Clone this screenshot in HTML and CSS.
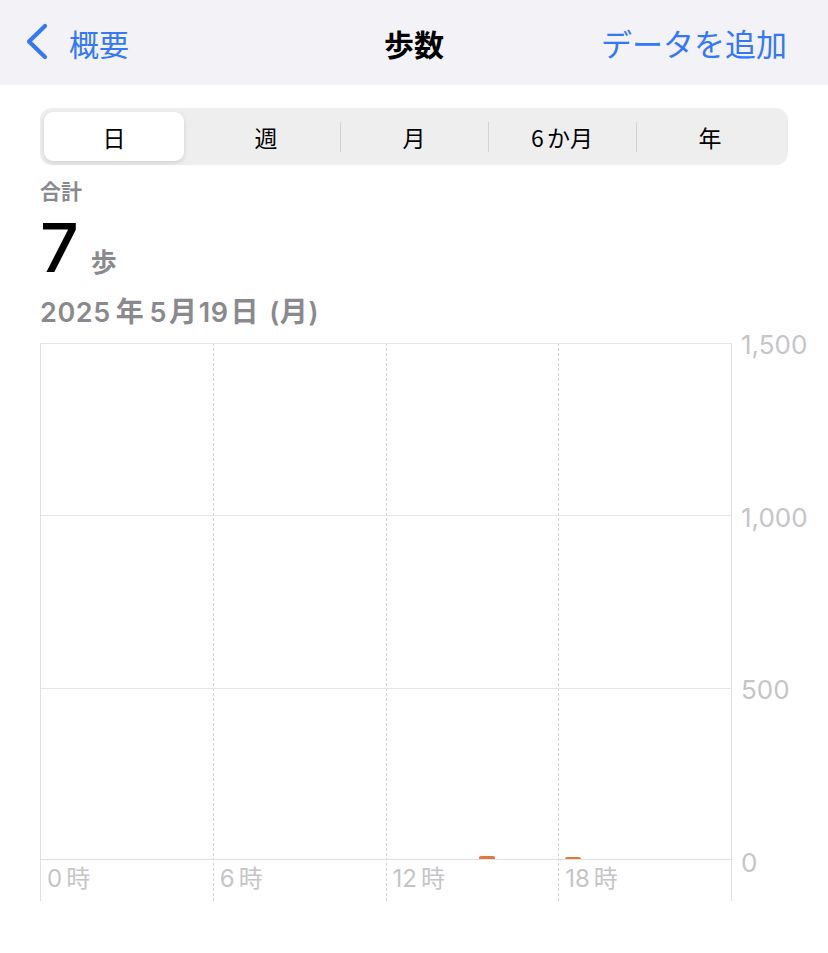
FILE: index.html
```html
<!DOCTYPE html>
<html lang="ja">
<head>
    <meta charset="UTF-8">
    <meta name="viewport" content="width=device-width, initial-scale=1.0">
    <title>歩数</title>
    <link rel="stylesheet" href="styles.css">
</head>
<body>
    <header class="navbar">
        <a class="back" href="#">
            <svg class="chevron" width="26" height="40" viewBox="0 0 26 40">
                <path d="M20 3 L4 18.5 L20 34" fill="none" stroke="#3478f6" stroke-width="4.2" stroke-linecap="round" stroke-linejoin="round"/>
            </svg>
            <span>概要</span>
        </a>
        <h1 class="title">歩数</h1>
        <a class="add" href="#">データを追加</a>
    </header>

    <main class="content">
        <div class="segmented">
            <div class="seg selected">日</div>
            <div class="seg">週</div>
            <div class="seg sep">月</div>
            <div class="seg sep">6<span class="kana">か</span>月</div>
            <div class="seg sep">年</div>
        </div>

        <section class="summary">
            <div class="label">合計</div>
            <div class="total"><span class="num">7</span><span class="unit">歩</span></div>
            <div class="date">2025<span class="cj">年</span>5<span class="cjn">月</span>19<span class="cjn">日</span><span class="paren">(<span class="cjp">月</span>)</span></div>
        </section>

        <!-- chart: 4 columns of 6 hours, 3 bands of 500 steps -->
        <section class="chart">
            <div class="plot">
                <div class="col c1"><span class="xlabel">0<span class="h">時</span></span></div>
                <div class="col c2"><span class="xlabel">6<span class="h">時</span></span></div>
                <div class="col c3"><span class="xlabel">12<span class="h">時</span></span></div>
                <div class="col c4"><span class="xlabel">18<span class="h">時</span></span></div>

                <div class="band b1"></div>
                <div class="band b2"></div>
                <div class="band b3"></div>

                <div class="bars c3"><span class="bar" style="margin-left: 92px; width: 16px; height: 3px;"></span></div>
                <div class="bars c4"><span class="bar" style="margin-left: 6px; width: 16px; height: 2px;"></span></div>
            </div>
            <div class="yaxis">
                <span>1,500</span>
                <span>1,000</span>
                <span>500</span>
                <span>0</span>
            </div>
        </section>
    </main>
</body>
</html>
```

FILE: styles.css
```css
body {
    margin: 0;
    padding: 0;
    background: #fff;
    color: #000;
    font-family: "Inter", "Noto Sans CJK JP", sans-serif;
}

a {
    text-decoration: none;
}

.navbar {
    height: 85px;
    background: #f2f2f7;
    display: grid;
    grid-template-columns: 1fr auto 1fr;
    align-items: center;
    padding: 0 41px;
}

.back {
    display: flex;
    align-items: center;
    gap: 18px;
    margin-left: -16px;
    color: #3478f6;
    font-size: 30px;
    font-family: "Noto Sans CJK JP", sans-serif;
}

.chevron {
    display: block;
}

.title {
    margin: 0;
    font-size: 30px;
    font-weight: 700;
    font-family: "Noto Sans CJK JP", sans-serif;
}

.add {
    justify-self: end;
    color: #3478f6;
    font-size: 31px;
    font-family: "Noto Sans CJK JP", sans-serif;
}

.content {
    padding: 23px 40px 0 40px;
}

.segmented {
    height: 57px;
    box-sizing: border-box;
    background: #eeeeef;
    border-radius: 12px;
    padding: 4px;
    display: grid;
    grid-template-columns: repeat(5, 1fr);
}

.seg {
    display: flex;
    align-items: center;
    justify-content: center;
    font-size: 23px;
    font-family: "Noto Sans CJK JP", sans-serif;
}

.seg .kana {
    margin-left: 3px;
}

.seg.sep {
    background: linear-gradient(#d3d3d6, #d3d3d6) left center / 1px 30px no-repeat;
}

.seg.selected {
    background: #fff;
    border-radius: 9px;
    margin-right: 8px;
    box-shadow: 0 2px 5px rgba(0, 0, 0, 0.12);
}

.summary {
    padding-top: 14px;
}

.label {
    color: #8a8a8e;
    font-size: 21px;
    font-weight: 700;
    line-height: 26px;
}

.total {
    display: flex;
    align-items: baseline;
    height: 90px;
    line-height: 84px;
}

.total .num {
    font-size: 68px;
    font-weight: 500;
}

.total .unit {
    margin-left: 12px;
    color: #8a8a8e;
    font-size: 26px;
    font-weight: 700;
    font-family: "Noto Sans CJK JP", sans-serif;
}

.date {
    color: #8a8a8e;
    font-size: 27px;
    font-weight: 600;
    line-height: 30px;
    letter-spacing: 0.6px;
}

.date .cj,
.date .cjn,
.date .cjp {
    font-size: 28px;
    font-weight: 700;
    font-family: "Noto Sans CJK JP", sans-serif;
}

.date .cj {
    margin: 0 5px;
}

.date .cjn {
    margin: 0 1px 0 2px;
}

.date .paren {
    margin-left: 9px;
}

.chart {
    display: flex;
    margin-top: 15px;
}

.plot {
    flex: none;
    width: 692px;
    display: grid;
    grid-template-columns: repeat(4, 1fr);
    grid-template-rows: 172px 173px 172px 41px;
    border-left: 1px solid #e0e0e2;
    box-sizing: border-box;
}

.col {
    grid-row: 1 / 5;
    border-right: 1px dashed #d4d4d6;
    display: flex;
    align-items: flex-end;
}

.c1 { grid-column: 1; }
.c2 { grid-column: 2; }
.c3 { grid-column: 3; }
.c4 { grid-column: 4; border-right: 1px solid #e0e0e2; }

.xlabel {
    height: 41px;
    padding-left: 6px;
    color: #c5c5c8;
    font-size: 24px;
    line-height: 38px;
}

.xlabel .h {
    margin-left: 4px;
}

.band {
    grid-column: 1 / 5;
    border-top: 1px solid #e6e6e8;
}

.b1 { grid-row: 1; }
.b2 { grid-row: 2; }
.b3 { grid-row: 3; border-bottom: 1px solid #e0e0e2; }

.bars {
    grid-row: 3;
    display: flex;
    align-items: flex-end;
    padding-bottom: 1px;
}

.bar {
    display: block;
    background: #e07a3a;
    border-radius: 2px 2px 0 0;
}

.yaxis {
    flex: none;
    display: flex;
    flex-direction: column;
    justify-content: space-between;
    height: 546px;
    margin-top: -12px;
    padding-left: 9px;
    color: #c5c5c8;
    font-size: 26px;
    line-height: 28px;
}
```
